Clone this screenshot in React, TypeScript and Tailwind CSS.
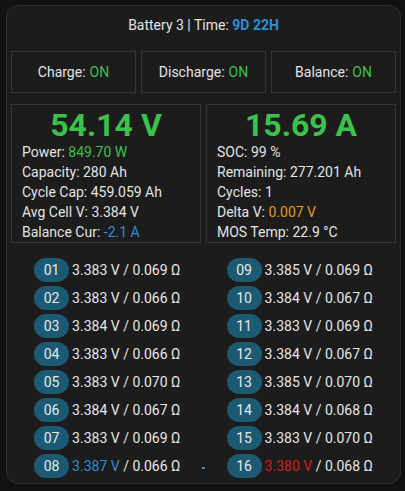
import React from "react";

const left = [
  ["01", "3.383", "0.069", ""],
  ["02", "3.383", "0.066", ""],
  ["03", "3.384", "0.069", ""],
  ["04", "3.383", "0.066", ""],
  ["05", "3.383", "0.070", ""],
  ["06", "3.384", "0.067", ""],
  ["07", "3.383", "0.069", ""],
  ["08", "3.387", "0.066", "blue"],
];
const right = [
  ["09", "3.385", "0.069", ""],
  ["10", "3.384", "0.067", ""],
  ["11", "3.383", "0.069", ""],
  ["12", "3.384", "0.067", ""],
  ["13", "3.385", "0.070", ""],
  ["14", "3.384", "0.068", ""],
  ["15", "3.383", "0.070", ""],
  ["16", "3.380", "0.068", "red"],
];

function Cell({ c }: { c: string[] }) {
  const vc =
    c[3] === "blue" ? "text-[#2d8fd8]" : c[3] === "red" ? "text-[#d11d1d]" : "";
  return (
    <div className="flex items-center h-[24px]">
      <div className="w-[35px] h-[24px] rounded-full bg-[#1b5a72] flex items-center justify-center text-[14px] text-[#e8e8e8]">
        {c[0]}
      </div>
      <div className="ml-[3px] text-[14px] text-[#e6e6e6] whitespace-nowrap">
        <span className={vc}>{c[1]} V</span> / {c[2]} Ω
      </div>
    </div>
  );
}

export default function App() {
  return (
    <div
      className="min-h-[491px] w-[405px] bg-[#111111] pt-[5px] pl-[6px]"
      style={{ fontFamily: "Roboto, 'Noto Sans', sans-serif" }}
    >
      <div className="relative w-[395px] h-[479px] rounded-[12px] border border-[#2e2e2e] bg-[#1c1c1c] px-[4px] pt-[10px] text-[#e3e3e3]">
        <div className="h-[18px] leading-[18px] text-[14px] text-center">
          Battery 3 | Time: <span className="font-bold text-[#2d8fd8]">9D 22H</span>
        </div>
        <div className="mt-[17px] grid grid-cols-3 gap-[5px]">
          {[
            ["Charge", "ON"],
            ["Discharge", "ON"],
            ["Balance", "ON"],
          ].map(([k, v]) => (
            <div
              key={k}
              className="h-[42px] border border-[#363636] flex items-center justify-center text-[14px]"
            >
              {k}: <span className="ml-[4px] text-[#3cc24c]">{v}</span>
            </div>
          ))}
        </div>
        <div className="mt-[11px] grid grid-cols-2 gap-[5px]">
          <div className="h-[139px] border border-[#363636] pt-[4px] px-[10px]">
            <div className="text-center text-[32px] leading-[33px] font-bold text-[#3cc24c]">
              54.14 V
            </div>
            <div className="text-[14px] leading-[20px] whitespace-nowrap">
              <div>
                Power: <span className="text-[#3cc24c]">849.70 W</span>
              </div>
              <div>Capacity: 280 Ah</div>
              <div>Cycle Cap: 459.059 Ah</div>
              <div>Avg Cell V: 3.384 V</div>
              <div>
                Balance Cur: <span className="text-[#2d8fd8]">-2.1 A</span>
              </div>
            </div>
          </div>
          <div className="h-[139px] border border-[#363636] pt-[4px] px-[10px]">
            <div className="text-center text-[32px] leading-[33px] font-bold text-[#3cc24c]">
              15.69 A
            </div>
            <div className="text-[14px] leading-[20px] whitespace-nowrap">
              <div>SOC: 99 %</div>
              <div>Remaining: 277.201 Ah</div>
              <div>Cycles: 1</div>
              <div>
                Delta V: <span className="text-[#e09a1c]">0.007 V</span>
              </div>
              <div>MOS Temp: 22.9 °C</div>
            </div>
          </div>
        </div>
        <div className="mt-[15px] grid grid-cols-2">
          <div className="flex flex-col items-center gap-[4px]">
            {left.map((c) => (
              <Cell key={c[0]} c={c} />
            ))}
          </div>
          <div className="flex flex-col items-center gap-[4px]">
            {right.map((c) => (
              <Cell key={c[0]} c={c} />
            ))}
          </div>
        </div>
        <div className="absolute left-[195px] top-[461px] w-[3px] h-[2px] bg-[#2d8fd8]" />
      </div>
    </div>
  );
}
